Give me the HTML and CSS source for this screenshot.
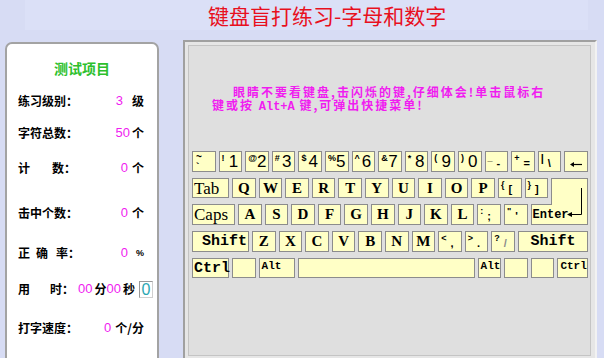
FILE: index.html
```html
<!DOCTYPE html>
<html lang="zh">
<head>
<meta charset="utf-8">
<title>键盘盲打练习</title>
<link rel="stylesheet" href="styles.css">
</head>
<body>
<header class="title-bar"><h1 class="title">键盘盲打练习-字母和数字</h1></header>
<main class="main">
  <aside class="stats">
    <div class="stats-title">测试项目</div>
    <div class="stat"><span class="label">练习级别：</span><span class="val"><span class="num">3</span><span class="unit u-wide">级</span></span></div>
    <div class="stat"><span class="label">字符总数：</span><span class="val"><span class="num">50</span><span class="unit">个</span></span></div>
    <div class="stat"><span class="label"><span class="sp-22">计</span>数：</span><span class="val"><span class="num">0</span><span class="unit u-mid">个</span></span></div>
    <div class="stat"><span class="label">击中个数：</span><span class="val"><span class="num">0</span><span class="unit u-mid">个</span></span></div>
    <div class="stat"><span class="label"><span class="sp-6">正</span><span class="sp-8">确</span>率：</span><span class="val"><span class="num">0</span><span class="unit pct">%</span></span></div>
    <div class="stat"><span class="label"><span class="sp-20">用</span>时：</span><span class="val val-time"><span class="num">00</span><span class="unit">分</span><span class="num">00</span><span class="unit">秒</span><span class="clock">0</span></span></div>
    <div class="stat"><span class="label">打字速度：</span><span class="val"><span class="num">0</span><span class="unit u-mid">个/分</span></span></div>
  </aside>
  <section class="frame">
    <div class="board">
      <p class="msg"><span class="line line-1">眼睛不要看键盘,击闪烁的键,仔细体会!单击鼠标右</span><span class="line">键或按 <span class="mono">Alt+A</span> 键,可弹出快捷菜单!</span></p>
      <div class="keyboard">
        <div class="row r-tall">
          <div class="key tilde"><span class="s-top">~</span><span class="s-bot">`</span></div>
          <div class="key dig"><span class="sup">!</span><span class="dg">1</span></div>
          <div class="key dig"><span class="sup">@</span><span class="dg">2</span></div>
          <div class="key dig"><span class="sup">#</span><span class="dg">3</span></div>
          <div class="key dig"><span class="sup">$</span><span class="dg">4</span></div>
          <div class="key dig"><span class="sup">%</span><span class="dg">5</span></div>
          <div class="key dig"><span class="sup">^</span><span class="dg">6</span></div>
          <div class="key dig"><span class="sup">&amp;</span><span class="dg">7</span></div>
          <div class="key dig"><span class="sup">*</span><span class="dg">8</span></div>
          <div class="key dig"><span class="sup">(</span><span class="dg">9</span></div>
          <div class="key dig"><span class="sup">)</span><span class="dg">0</span></div>
          <div class="key sym"><span class="sup">_</span><span class="lo">-</span></div>
          <div class="key sym"><span class="sup">+</span><span class="lo">=</span></div>
          <div class="key sym"><span class="sup bar">|</span><span class="lo">\</span></div>
          <div class="key back fill"><svg class="back-arrow" width="12" height="7" viewBox="0 0 12 7"><path d="M3 3.5H12" stroke="#000" stroke-width="1.2"/><path d="M0 3.5L4 1V6Z" fill="#000"/></svg></div>
        </div>
        <div class="row">
          <div class="key tl w-tab">Tab</div>
          <div class="key let">Q</div>
          <div class="key let">W</div>
          <div class="key let">E</div>
          <div class="key let">R</div>
          <div class="key let">T</div>
          <div class="key let">Y</div>
          <div class="key let">U</div>
          <div class="key let">I</div>
          <div class="key let">O</div>
          <div class="key let">P</div>
          <div class="key sym"><span class="sup">{</span><span class="lo">[</span></div>
          <div class="key sym"><span class="sup">}</span><span class="lo">]</span></div>
          <div class="key enter-top fill"><svg class="ret" width="16" height="29" viewBox="0 0 16 29"><path d="M14.5 0V26.5H4" stroke="#000" stroke-width="1" fill="none"/><path d="M0 26.5L5 24V29Z" fill="#000"/></svg></div>
        </div>
        <div class="row r-tall">
          <div class="key tl w-caps">Caps</div>
          <div class="key let">A</div>
          <div class="key let">S</div>
          <div class="key let">D</div>
          <div class="key let">F</div>
          <div class="key let">G</div>
          <div class="key let">H</div>
          <div class="key let">J</div>
          <div class="key let">K</div>
          <div class="key let">L</div>
          <div class="key sym"><span class="sup">:</span><span class="lo">;</span></div>
          <div class="key sym"><span class="sup">"</span><span class="lo">'</span></div>
          <div class="key enter-bot fill">Enter</div>
        </div>
        <div class="row r-tall">
          <div class="key shift w-shift">Shift</div>
          <div class="key let">Z</div>
          <div class="key let">X</div>
          <div class="key let">C</div>
          <div class="key let">V</div>
          <div class="key let">B</div>
          <div class="key let">N</div>
          <div class="key let">M</div>
          <div class="key sym"><span class="sup">&lt;</span><span class="lo">,</span></div>
          <div class="key sym"><span class="sup">&gt;</span><span class="lo">.</span></div>
          <div class="key sym"><span class="sup">?</span><span class="lo faint">/</span></div>
          <div class="key shift shift-r fill">Shift</div>
        </div>
        <div class="row">
          <div class="key ctrl w-ctrl">Ctrl</div>
          <div class="key"></div>
          <div class="key small w-alt">Alt</div>
          <div class="key w-space"></div>
          <div class="key small">Alt</div>
          <div class="key"></div>
          <div class="key"></div>
          <div class="key small fill">Ctrl</div>
        </div>
      </div>
    </div>
  </section>
</main>
</body>
</html>
```
FILE: styles.css
```css
html, body {
  margin: 0;
  height: 100%;
  overflow: hidden;
}
body {
  background: #d7dcf4;
  font-family: "Noto Sans CJK SC", sans-serif;
  color: #000;
}
.title-bar {
  height: 30px;
  margin: 0 16px 0 25px;
  background: #dbe0f7;
}
.title {
  margin: 0;
  padding-left: 183px;
  font: 400 21px/30px "Noto Sans CJK SC", sans-serif;
  color: #e8101e;
}
.main {
  display: flex;
  align-items: flex-start;
}

/* left stats panel */
.stats {
  box-sizing: border-box;
  margin: 12px 0 0 5px;
  width: 154px;
  height: 340px;
  border: 2px solid #a3a3a3;
  border-radius: 7px;
  background: #fff;
  padding-top: 14px;
  display: grid;
  grid-template-rows: 33px 32px 35px 45px 40px 36px 39px 20px;
  align-content: start;
}
.stats-title {
  height: 20px;
  text-align: center;
  font: 700 14px/20px "Noto Sans CJK SC", sans-serif;
  color: #2cc02c;
}
.stat {
  height: 20px;
  display: flex;
  align-items: center;
  padding: 0 13px 0 11px;
  font: 700 12px/20px "Noto Sans CJK SC", sans-serif;
}
.label {
  white-space: nowrap;
}
.sp-22 { margin-right: 22px; }
.sp-20 { margin-right: 20px; }
.sp-6 { margin-right: 6px; }
.sp-8 { margin-right: 8px; }
.val {
  margin-left: auto;
  display: flex;
  align-items: center;
  white-space: nowrap;
}
.val-time {
  margin-right: -9px;
}
.num {
  font: 400 13px/20px "Liberation Sans", sans-serif;
  color: #f01cf0;
}
.unit {
  margin-left: 2px;
}
.u-wide { margin-left: 9px; }
.u-mid { margin-left: 4px; }
.pct {
  margin-left: 8px;
  font: 700 9px/20px "Liberation Sans", sans-serif;
}
.clock {
  box-sizing: border-box;
  margin-left: 4px;
  width: 14px;
  height: 17px;
  border: 1px solid #9a9a9a;
  border-right-color: #d0d0d0;
  border-bottom-color: #d0d0d0;
  background: #fff;
  color: #2ba7b2;
  font: 400 16px/15px "Liberation Sans", sans-serif;
  text-align: center;
}

/* right keyboard frame */
.frame {
  box-sizing: border-box;
  margin: 10px 0 0 24px;
  width: 414px;
  height: 330px;
  border-style: solid;
  border-width: 2px;
  border-color: #a0a0a0 #f2f2f2 #f2f2f2 #a0a0a0;
  background: #e6e6e6;
  padding: 3px 4px 0 3px;
}
.board {
  box-sizing: border-box;
  height: 311px;
  border: 1px solid #c4c4c4;
  background: #dfdfdf;
  padding: 39px 0 0 3px;
}
.msg {
  margin: 0 0 0 20px;
  display: flex;
  flex-direction: column;
  font: 700 12px/13px "Noto Sans CJK SC", sans-serif;
  letter-spacing: 2px;
  color: #f01cf0;
  white-space: nowrap;
}
.line {
  display: block;
  height: 13px;
  line-height: 13px;
}
.line-1 {
  padding-left: 21px;
}
.mono {
  font-family: "Liberation Mono", monospace;
  letter-spacing: 0;
}
.keyboard {
  margin-top: 40px;
  width: 396px;
  display: flex;
  flex-direction: column;
  gap: 6px;
}
.row {
  display: flex;
  align-items: flex-start;
  gap: 3px;
  height: 20px;
}
.row.r-tall {
  height: 21px;
}
.key {
  box-sizing: border-box;
  flex: none;
  width: 23.6px;
  height: 100%;
  border: 1px solid #8c8c8c;
  background: #ffffc6;
  display: flex;
  align-items: center;
  white-space: nowrap;
}
.fill {
  flex: 1 1 auto;
  width: auto;
}
.w-tab { width: 37px; }
.w-caps { width: 43px; }
.w-shift { width: 57px; }
.w-ctrl { width: 37px; }
.w-alt { width: 36px; }
.w-space { width: 177px; }

.tilde {
  flex-direction: column;
  align-items: flex-start;
  padding-left: 3px;
  font: 700 10px/9px "Liberation Sans", sans-serif;
}
.s-bot { margin-top: 1px; }
.dig {
  justify-content: space-between;
  padding: 0 3px 0 2px;
}
.sup {
  align-self: flex-start;
  margin-top: 1px;
  font: 700 9px/10px "Liberation Sans", sans-serif;
}
.sup.bar {
  font-size: 11px;
  line-height: 11px;
}
.dg {
  font: 400 17px/1 "Liberation Sans", sans-serif;
}
.sym {
  padding-left: 2px;
}
.lo {
  align-self: flex-end;
  margin: 0 0 2px 4px;
  font: 700 11px/12px "Liberation Sans", sans-serif;
}
.lo.faint {
  color: #8a8a8a;
}
.back {
  justify-content: center;
  padding-top: 5px;
}
.let {
  justify-content: center;
  font: 700 15px/1 "Liberation Serif", serif;
}
.tl {
  padding-left: 1px;
  font: 400 17px/1 "Liberation Serif", serif;
}
.shift {
  justify-content: center;
  padding-left: 8px;
  font: 700 15px/1 "Liberation Mono", monospace;
}
.shift-r {
  padding-left: 0;
}
.ctrl {
  padding-left: 1px;
  font: 700 15px/1 "Liberation Mono", monospace;
}
.small {
  align-items: flex-start;
  padding: 2px 0 0 2px;
  font: 700 11px/1 "Liberation Mono", monospace;
}
.enter-top {
  position: relative;
  z-index: 1;
  height: 27px;
  border-bottom: none;
}
.ret {
  position: absolute;
  left: 15px;
  top: 9px;
}
.enter-bot {
  padding-left: 1px;
  font: 700 12px/1 "Liberation Mono", monospace;
}
```
